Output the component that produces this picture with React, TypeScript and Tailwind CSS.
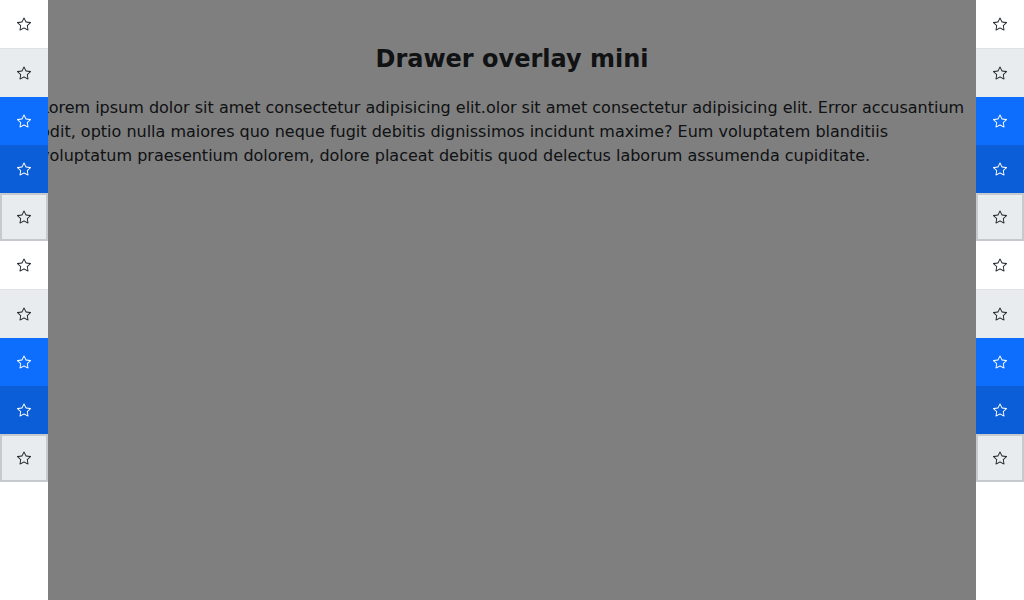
import React from "react";

const font = { fontFamily: '"DejaVu Sans", sans-serif' };

function StarIcon({ className }: { className?: string }) {
  return (
    <svg viewBox="0 0 16 16" width="14" height="14" fill="currentColor" className={className}>
      <path d="M2.866 14.85c-.078.444.36.791.746.593l4.39-2.256 4.389 2.256c.386.198.824-.149.746-.592l-.83-4.73 3.522-3.356c.33-.314.16-.888-.282-.95l-4.898-.696L8.465.792a.513.513 0 0 0-.927 0L5.354 5.12l-4.898.696c-.441.062-.612.636-.283.95l3.523 3.356-.83 4.73zm4.905-2.767-3.686 1.894.694-3.957a.56.56 0 0 0-.163-.505L1.71 6.745l4.052-.576a.53.53 0 0 0 .393-.288L8 2.223l1.847 3.658a.53.53 0 0 0 .393.288l4.052.575-2.906 2.77a.56.56 0 0 0-.163.506l.694 3.957-3.686-1.894a.5.5 0 0 0-.461 0z" />
    </svg>
  );
}

// five button looks, repeated twice in each drawer
const variants = [
  "h-12 bg-white text-[#212529]",
  "h-[49px] bg-[#e9ecef] border-t border-[#dee2e6] text-[#212529]",
  "h-12 bg-[#0d6efd] text-white",
  "h-12 bg-[#0b5ed7] text-white",
  "h-12 bg-[#e9ecef] border-2 border-[#c6cacf] text-[#212529]",
];

function MiniDrawer({ side }: { side: "left" | "right" }) {
  const items = [...variants, ...variants];
  return (
    <aside className={`fixed top-0 bottom-0 z-20 w-12 bg-white flex flex-col ${side === "left" ? "left-0" : "right-0"}`}>
      {items.map((v, i) => (
        <button key={i} className={`w-12 shrink-0 flex items-center justify-center ${v}`}>
          <StarIcon />
        </button>
      ))}
    </aside>
  );
}

export default function App() {
  return (
    <div className="relative min-h-screen bg-white text-[#212529]" style={font}>
      <main className="px-10 pt-[45px]">
        <h1 className="text-center text-[24px] leading-[29px] font-bold mb-[22px]">Drawer overlay mini</h1>
        <p className="text-[16px] leading-6">
          Lorem ipsum dolor sit amet consectetur adipisicing elit.olor sit amet consectetur adipisicing elit. Error accusantium odit, optio nulla maiores quo neque fugit debitis dignissimos incidunt maxime? Eum voluptatem blanditiis voluptatum praesentium dolorem, dolore placeat debitis quod delectus laborum assumenda cupiditate.
        </p>
      </main>

      <div className="fixed inset-0 z-10 bg-black/50" />

      <MiniDrawer side="left" />
      <MiniDrawer side="right" />
    </div>
  );
}
